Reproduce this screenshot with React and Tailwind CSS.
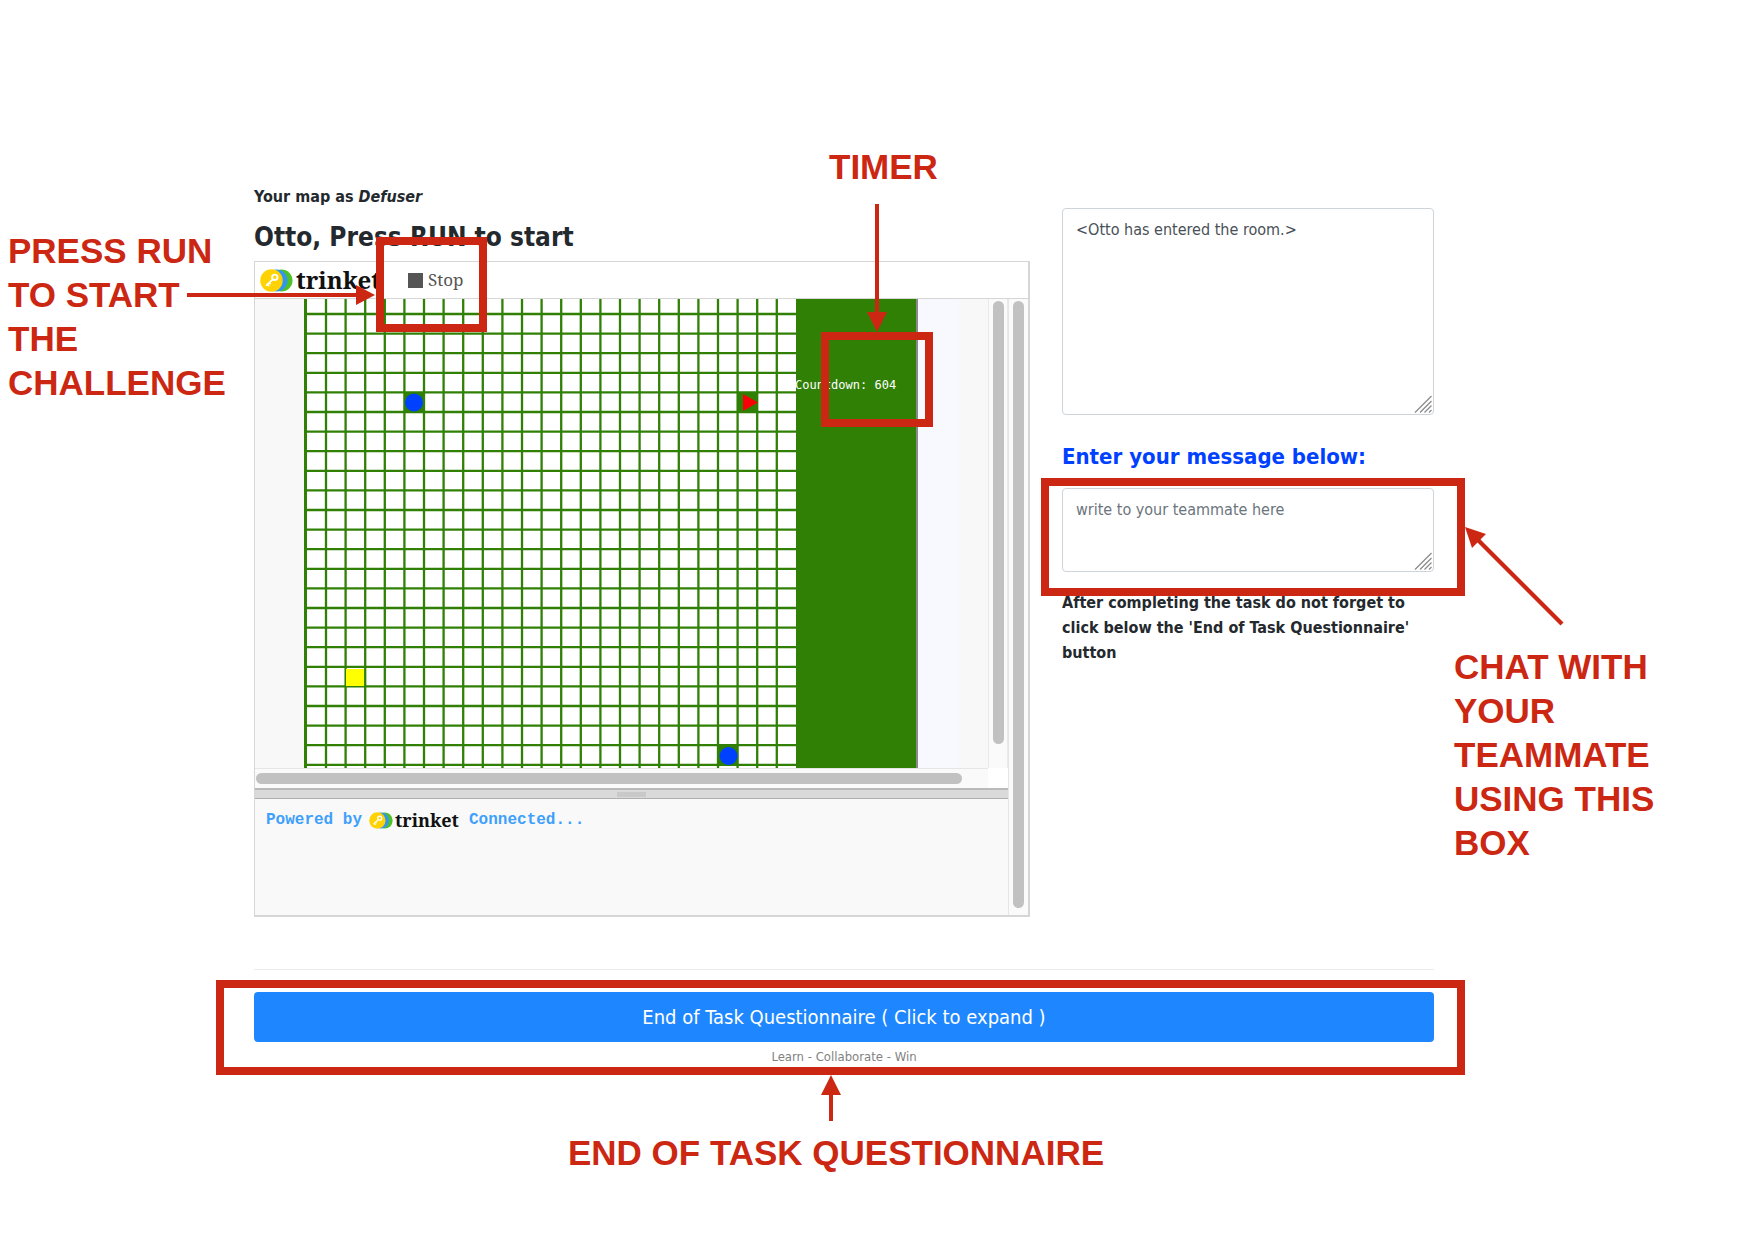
import React from "react";

const RED = "#cb2712";
const GREEN = "#308006";
const BLUE = "#0040ff";
const PITCH = 19.6;

function TrinketMark({ className }) {
  return (
    <svg viewBox="0 0 33 23" className={className} aria-hidden="true">
      <circle cx="21.5" cy="11.5" r="11" fill="#4fc026" />
      <circle cx="16.5" cy="11.5" r="11" fill="#3296ee" />
      <circle cx="11.5" cy="11.5" r="11.2" fill="#ffd204" />
      <g stroke="#fff" fill="none">
        <circle cx="14.8" cy="8.3" r="2.7" strokeWidth="1.9" />
        <path d="M12.8 10.3 6 16.6M7.4 15.4l1.7 1.7M9.2 13.7l1.4 1.4" strokeWidth="1.7" />
      </g>
    </svg>
  );
}

function Frame({ className }) {
  return <div className={`pointer-events-none absolute z-10 border-8 border-[#cb2712] ${className}`} />;
}

function GameStage() {
  const columns = Array.from({ length: 24 }, (_, i) => 22 + i * PITCH);
  const rows = Array.from({ length: 24 }, (_, i) => 15 + i * PITCH);
  return (
    <svg viewBox="0 0 614 469" className="h-[469px] w-[614px] shrink-0" role="img" aria-label="Game map">
      <rect width="612" height="469" fill={GREEN} />
      <rect x="3" width="489" height="469" fill="#fff" />
      <g stroke={GREEN} strokeWidth="2.3">
        {columns.map((x) => <line key={x} x1={x} x2={x} y1="0" y2="469" />)}
        {rows.map((y) => <line key={y} x1="0" x2="492" y1={y} y2={y} />)}
      </g>
      <rect x="101" y="94" width="19" height="19" fill={GREEN} />
      <circle cx="110" cy="103.5" r="9" fill={BLUE} />
      <rect x="434" y="94" width="19" height="19" fill={GREEN} />
      <path d="M439 95v17l15-8.5z" fill="#fb0007" />
      <rect x="42" y="370" width="18" height="17" fill="#ffff00" />
      <rect x="415" y="447" width="19" height="19" fill={GREEN} />
      <circle cx="424.5" cy="457" r="9" fill={BLUE} />
      <text x="491" y="90" fill="#fff" fontFamily="DejaVu Sans Mono, monospace" fontSize="12">Countdown: 604</text>
      <rect x="612" width="2" height="469" fill="#8a8a8a" />
    </svg>
  );
}

function TrinketPanel() {
  return (
    <section className="mt-2 border border-r-2 border-b-2 border-[#d6d6d6]">
      <header className="flex h-[37px] items-center border-b border-[#d6d6d6] bg-white pl-[5px]">
        <TrinketMark className="h-[23px] w-[33px]" />
        <span className="ml-[3px] w-[89px] font-['Noto_Serif','DejaVu_Serif',serif] text-2xl leading-8 font-bold text-[#111]">trinket</span>
        <button type="button" className="ml-[23px] flex items-center gap-[5px] font-['Noto_Serif','DejaVu_Serif',serif] text-[17px] text-[#555]">
          <span className="h-[15px] w-[15px] bg-[#555]" />
          Stop
        </button>
      </header>
      <div className="flex">
        <div className="min-w-0 flex-1">
          <div className="flex bg-[#f8f8f8]">
            <div className="min-w-0 flex-1">
              <div className="flex overflow-hidden pl-[49px]">
                <GameStage />
                <div className="w-[41px] bg-[#f8f9ff]" />
              </div>
              <div className="h-5 border-t border-[#e6e6e6] bg-[#fafafa] pt-1 pr-[26px] pl-px">
                <div className="h-[11px] rounded-full bg-[#c1c1c1]" />
              </div>
            </div>
            <div className="flex w-5 flex-col">
              <div className="flex flex-1 flex-col border-x border-[#e9e9e9] bg-[#fafafa] pt-0.5 pl-1">
                <div className="h-[443px] w-[11px] rounded-full bg-[#c1c1c1]" />
              </div>
              <div className="h-5 bg-white" />
            </div>
          </div>
          <div className="flex h-[11px] items-center justify-center border-t-2 border-b border-t-[#bababa] border-b-[#aeaeae] bg-[#dadada]">
            <div className="h-[5px] w-[29px] bg-[#c9c9c9]" />
          </div>
          <div className="flex h-[116px] items-start bg-[#f9f9f9] pt-[9px] pl-[11px] font-['Courier_New','Liberation_Mono',monospace] text-base leading-6 font-bold text-[#3ea0fc]">
            <span>Powered by</span>
            <a href="#trinket" className="ml-[7px] flex h-6 items-center gap-0.5 text-[#111]">
              <TrinketMark className="h-[17px] w-6" />
              <span className="w-[66px] font-['Noto_Serif','DejaVu_Serif',serif] text-lg leading-6">trinket</span>
            </a>
            <span className="ml-2">Connected...</span>
          </div>
        </div>
        <div className="w-5 border-l border-[#e6e6e6] bg-[#fafafa] pt-0.5 pl-1">
          <div className="h-[607px] w-[11px] rounded-full bg-[#c1c1c1]" />
        </div>
      </div>
    </section>
  );
}

function Grip() {
  return (
    <svg viewBox="0 0 18 18" className="pointer-events-none absolute right-0.5 bottom-0.5 h-[18px] w-[18px]" aria-hidden="true">
      <path d="M1 17.5 17.5 1M6 17.5 17.5 6M10.5 17.5l7-7M15 17.5l2.5-2.5" stroke="#8c8c8c" strokeWidth="1.3" fill="none" />
    </svg>
  );
}

function ChatColumn() {
  return (
    <div className="pt-[23px]">
      <div className="relative">
        <textarea
          readOnly
          aria-label="Chat log"
          defaultValue="<Otto has entered the room.>"
          className="block h-[207px] w-full resize-none rounded border border-[#ced4da] bg-white px-[13px] py-[9px] text-base leading-6 text-[#495057]"
        />
        <Grip />
      </div>
      <label htmlFor="message" className="mt-[26px] block text-[22px] leading-8 font-bold text-[#0040ff]">
        Enter your message below:
      </label>
      <div className="relative mt-[15px]">
        <textarea
          id="message"
          placeholder="write to your teammate here"
          className="block h-[84px] w-full resize-none rounded border border-[#ced4da] bg-white px-[13px] py-[9px] text-base leading-6 text-[#495057] placeholder:text-[#6c757d]"
        />
        <Grip />
        <Frame className="-top-[10px] -right-[31px] -left-[21px] h-[118px]" />
        <svg viewBox="0 0 100 100" className="pointer-events-none absolute top-[38px] left-full ml-[31px] h-[100px] w-[100px]" aria-hidden="true">
          <path d="M12 13 97 98" stroke={RED} strokeWidth="4.2" />
          <path d="M0 1 21 8 7 22z" fill={RED} />
        </svg>
      </div>
      <p className="mt-[18px] text-base leading-[25px] font-bold text-[#24292e]">
        After completing the task do not forget to click below the 'End of Task Questionnaire' button
      </p>
    </div>
  );
}

export default function App() {
  return (
    <div className="flex min-h-screen bg-white font-['Tahoma','DejaVu_Sans_Condensed','DejaVu_Sans',sans-serif] text-[#24292e]">
      <aside className="w-[254px] shrink-0 pt-[229px] pl-2 font-['Helvetica_Neue','Liberation_Sans',sans-serif] text-[35px] leading-[44px] font-bold text-[#cb2712]">
        PRESS RUN<br />TO START<br />THE<br />CHALLENGE
      </aside>

      <main className="min-w-0 flex-1 pt-[185px]">
        <div className="grid grid-cols-[776fr_372fr] gap-8">
          <div className="relative">
            <p className="text-base leading-6 font-bold">Your map as <em>Defuser</em></p>
            <h1 className="mt-3 text-[26px] leading-8 font-bold">Otto, Press RUN to start</h1>
            <TrinketPanel />

            <Frame className="top-[52px] left-[122px] h-[95px] w-[111px]" />
            <svg viewBox="0 0 188 20" className="pointer-events-none absolute top-[100px] -left-[67px] z-10 h-5 w-[188px]" aria-hidden="true">
              <path d="M0 10h172" stroke={RED} strokeWidth="4" />
              <path d="M169 0v20l19-10z" fill={RED} />
            </svg>

            <span className="absolute -top-10 left-[575px] font-['Helvetica_Neue','Liberation_Sans',sans-serif] text-[35px] leading-[44px] font-bold text-[#cb2712]">TIMER</span>
            <svg viewBox="0 0 20 128" className="pointer-events-none absolute top-[19px] left-[613px] z-10 h-32 w-5" aria-hidden="true">
              <path d="M10 0v110" stroke={RED} strokeWidth="4" />
              <path d="M0 108h20l-10 20z" fill={RED} />
            </svg>
            <Frame className="top-[147px] left-[567px] h-[95px] w-[112px]" />
          </div>
          <ChatColumn />
        </div>

        <hr className="mt-[52px] border-[#ebebeb]" />
        <div className="relative mt-[22px]">
          <button type="button" className="block h-[50px] w-full rounded bg-[#1e87ff] text-xl text-white">
            End of Task Questionnaire ( Click to expand )
          </button>
          <p className="mt-[7px] text-center text-[13px] leading-4 text-[#828282]">Learn - Collaborate - Win</p>
          <Frame className="-top-3 -right-[31px] -left-[38px] h-[95px]" />
        </div>
        <div className="mt-[10px] flex flex-col items-center">
          <svg viewBox="0 0 20 46" className="mr-[26px] h-[46px] w-5" aria-hidden="true">
            <path d="M10 18v28" stroke={RED} strokeWidth="4" />
            <path d="M0 20h20L10 0z" fill={RED} />
          </svg>
          <strong className="mt-[10px] mr-4 font-['Helvetica_Neue','Liberation_Sans',sans-serif] text-[35px] leading-[44px] text-[#cb2712]">
            END OF TASK QUESTIONNAIRE
          </strong>
        </div>
      </main>

      <aside className="w-[320px] shrink-0 pt-[645px] pl-5 font-['Helvetica_Neue','Liberation_Sans',sans-serif] text-[35px] leading-[44px] font-bold text-[#cb2712]">
        CHAT WITH<br />YOUR<br />TEAMMATE<br />USING THIS<br />BOX
      </aside>
    </div>
  );
}
